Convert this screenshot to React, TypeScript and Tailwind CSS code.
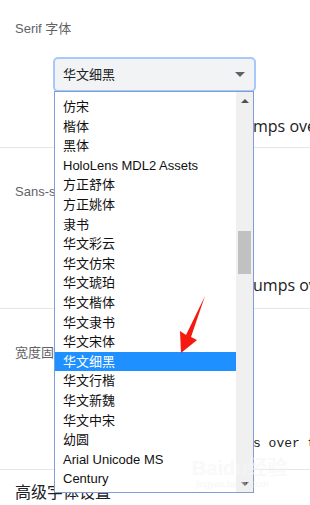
import React from "react";

const fonts = [
  "仿宋",
  "楷体",
  "黑体",
  "HoloLens MDL2 Assets",
  "方正舒体",
  "方正姚体",
  "隶书",
  "华文彩云",
  "华文仿宋",
  "华文琥珀",
  "华文楷体",
  "华文隶书",
  "华文宋体",
  "华文细黑",
  "华文行楷",
  "华文新魏",
  "华文中宋",
  "幼圆",
  "Arial Unicode MS",
  "Century",
  "Leelawadee",
];

const sans = { fontFamily: '"Liberation Sans", "Noto Sans CJK SC", sans-serif' };

// one settings block: label, select row, preview text
function Section({ label, preview, mono }: { label: string; preview: string; mono?: boolean }) {
  return (
    <div className="border-b border-[#e4e6e9] h-[161px] flex flex-col pt-[36px]">
      <div className="pl-[15px] text-[13px] text-[#5f6368] leading-[16px]">{label}</div>
      <div className="h-[73px]" />
      <div
        className={`pl-[253px] whitespace-nowrap overflow-hidden text-[#202124] ${mono ? "text-[13px]" : "text-[16px]"}`}
        style={mono ? { fontFamily: '"Liberation Mono", monospace' } : { fontFamily: '"Open Sans", sans-serif' }}
      >
        {preview}
      </div>
    </div>
  );
}

export default function App() {
  return (
    <div className="relative w-[310px] h-[505px] overflow-hidden bg-white" style={sans}>
      {/* Serif */}
      <div className="border-b border-[#e4e6e9] h-[148px] flex flex-col pt-[21px]">
        <div className="pl-[15px] text-[13px] text-[#5f6368] leading-[16px]">Serif 字体</div>
        <div className="mt-[20px] ml-[53px] w-[203px] h-[35px] rounded-[5px] border-2 border-[#a8c7fa] bg-[#f1f3f4] flex items-center justify-between pl-[8px] pr-[9px]">
          <span className="text-[13px] text-[#202124]">华文细黑</span>
          <svg width="10" height="5" viewBox="0 0 10 5">
            <path d="M0 0 L10 0 L5 5 Z" fill="#5f6368" />
          </svg>
        </div>
        <div className="mt-[22px] pl-[253px] whitespace-nowrap overflow-hidden text-[16px] text-[#202124]" style={{ fontFamily: '"Open Sans", sans-serif' }}>
          mps over the lazy dog
        </div>
      </div>
      <Section label="Sans-serif 字体" preview="umps over the lazy dog" />
      <Section label="宽度固定的字体" preview="s over the lazy dog" mono />
      <div className="pl-[15px] pt-[11px] text-[16px] text-[#202124]">高级字体设置</div>

      {/* open dropdown list */}
      <div className="absolute left-[54px] top-[91px] w-[200px] h-[402px] border border-[#7f9fd4] bg-white flex overflow-hidden">
        <div className="flex-1 pt-[5px] flex flex-col">
          {fonts.map((f) => (
            <div
              key={f}
              className={`h-[19.6px] shrink-0 flex items-center pl-[8px] text-[13px] whitespace-nowrap ${
                f === "华文细黑" ? "bg-[#1e90ff] text-white" : "text-[#111]"
              }`}
            >
              {f}
            </div>
          ))}
        </div>
        <div className="w-[17px] bg-[#f0f0f0] flex flex-col items-center">
          <div className="h-[17px] flex items-center justify-center">
            <svg width="8" height="4" viewBox="0 0 8 4">
              <path d="M0 4 L8 4 L4 0 Z" fill="#505050" />
            </svg>
          </div>
          <div className="mt-[122px] w-[13px] h-[43px] bg-[#c1c1c1]" />
          <div className="flex-1" />
          <div className="h-[17px] flex items-center justify-center">
            <svg width="8" height="4" viewBox="0 0 8 4">
              <path d="M0 0 L8 0 L4 4 Z" fill="#505050" />
            </svg>
          </div>
        </div>
      </div>

      {/* red pointer arrow */}
      <svg className="absolute left-0 top-0" width="310" height="505" viewBox="0 0 310 505">
        <polygon points="205,296 191,337 197,340 181,353 180,331 186,335" fill="#f5190f" />
      </svg>

      {/* watermark */}
      <div className="absolute left-[192px] top-[458px] text-[20px] font-bold text-[#f6f6f6] opacity-60 leading-none">Baidu经验</div>
      <div className="absolute left-[196px] top-[480px] text-[9px] text-[#f2f2f2] opacity-60 leading-none">jingyan.baidu.com</div>
    </div>
  );
}
